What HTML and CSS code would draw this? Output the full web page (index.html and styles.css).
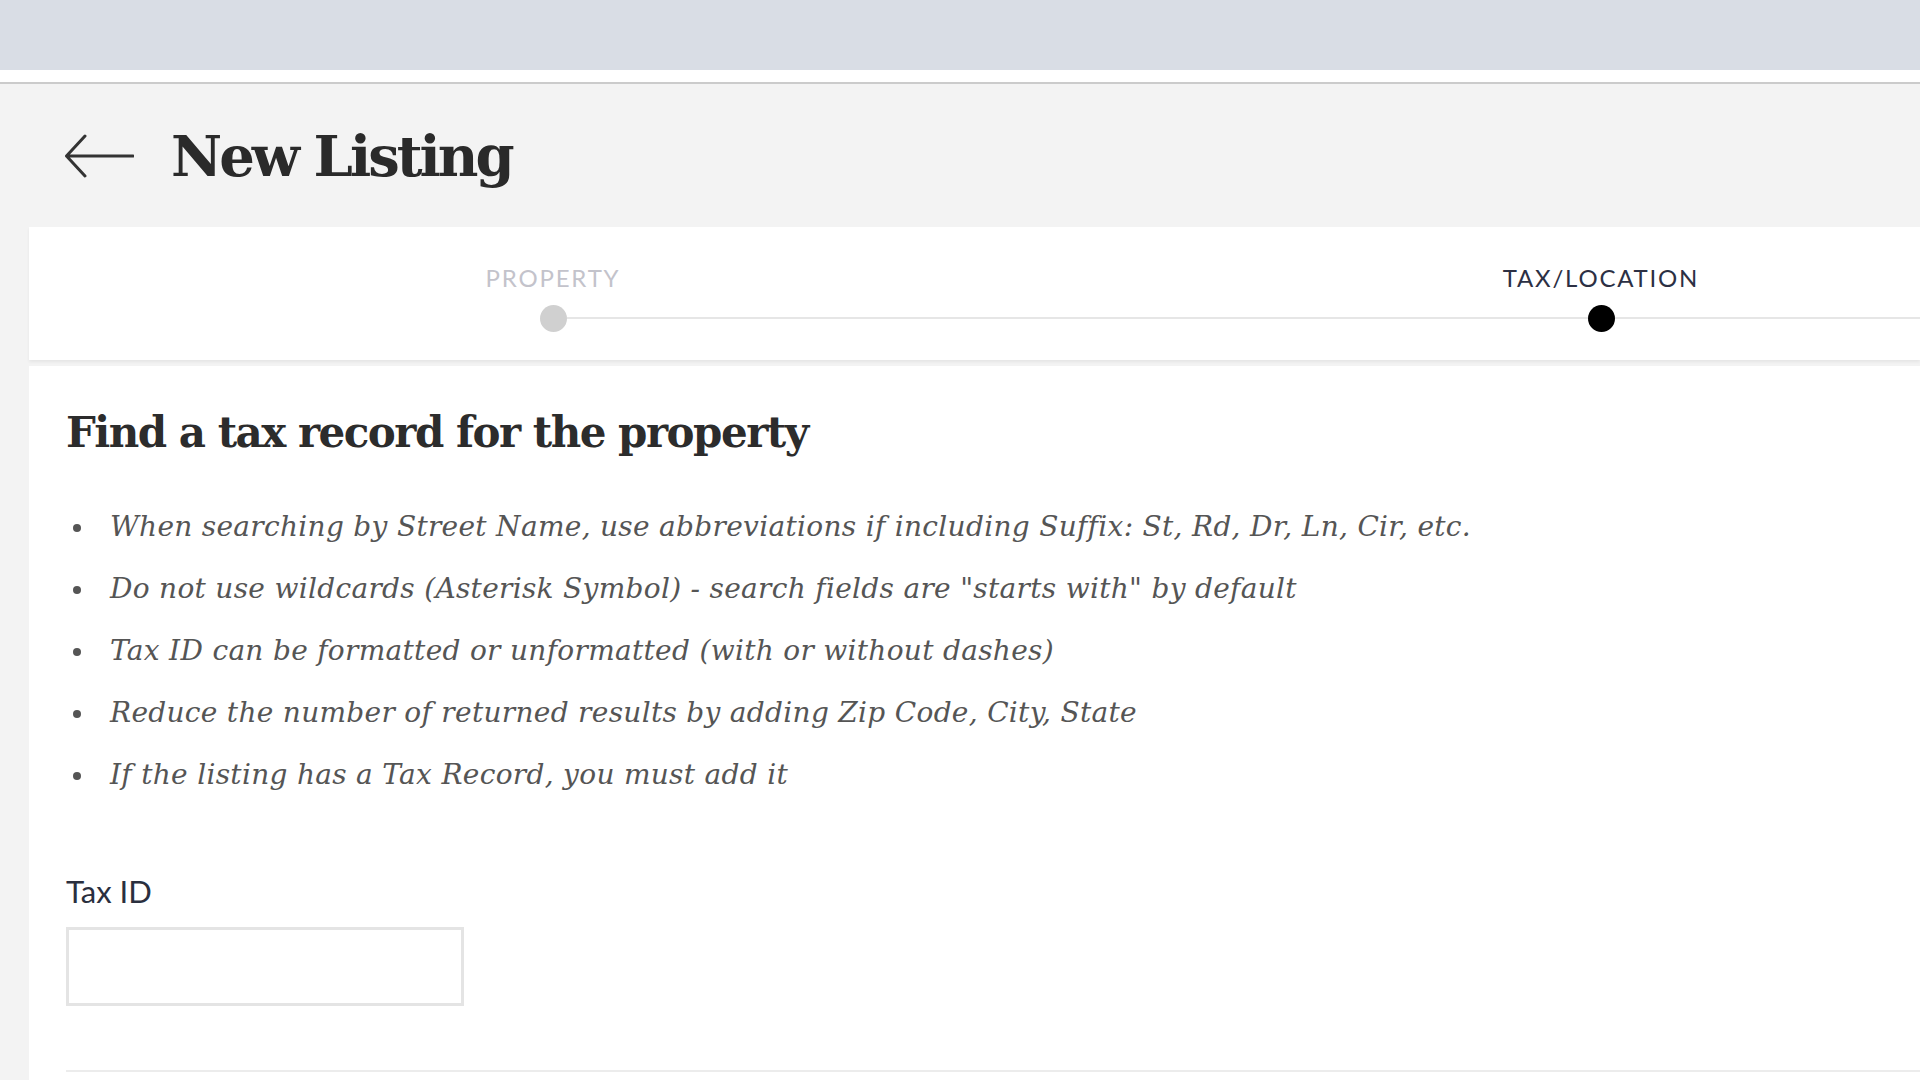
FILE: index.html
```html
<!DOCTYPE html>
<html lang="en">
<head>
<meta charset="utf-8">
<title>New Listing</title>
<link rel="stylesheet" href="styles.css">
</head>
<body>
<div class="topbar"></div>
<div class="topstrip"></div>
<header class="page-header">
  <svg class="back" width="70" height="44" viewBox="0 0 70 44" aria-hidden="true">
    <path d="M2.5 22 H69 M21 2 L2.5 22 L21 42" fill="none" stroke="#333" stroke-width="3" stroke-linecap="round" stroke-linejoin="round"/>
  </svg>
  <h1 class="page-title">New Listing</h1>
</header>
<main class="cards">
  <section class="stepper">
    <div class="step step-done">
      <div class="step-label">PROPERTY</div>
      <div class="step-track"><span class="track track-none"></span><span class="dot"></span><span class="track"></span></div>
    </div>
    <div class="step step-active">
      <div class="step-label">TAX/LOCATION</div>
      <div class="step-track"><span class="track"></span><span class="dot"></span><span class="track"></span></div>
    </div>
    <div class="step step-next">
      <div class="step-label"></div>
      <div class="step-track"><span class="track"></span><span class="dot"></span><span class="track"></span></div>
    </div>
  </section>
  <section class="content">
    <h2 class="section-title">Find a tax record for the property</h2>
    <ul class="tips">
      <li>When searching by Street Name, use abbreviations if including Suffix: St, Rd, Dr, Ln, Cir, etc.</li>
      <li>Do not use wildcards (Asterisk Symbol) - search fields are "starts with" by default</li>
      <li>Tax ID can be formatted or unformatted (with or without dashes)</li>
      <li>Reduce the number of returned results by adding Zip Code, City, State</li>
      <li>If the listing has a Tax Record, you must add it</li>
    </ul>
    <label class="field-label" for="taxid">Tax ID</label>
    <input class="field-input" id="taxid" type="text">
    <div class="divider"></div>
  </section>
</main>
</body>
</html>
```
FILE: styles.css
```css
* { box-sizing: border-box; }
html, body {
  margin: 0;
  padding: 0;
  height: 100%;
}
body {
  background: #f3f3f3;
  overflow: hidden;
  font-family: "Lato", "Liberation Sans", sans-serif;
}
.topbar {
  height: 70px;
  background: #d9dde5;
}
.topstrip {
  height: 14px;
  background: #ffffff;
  border-bottom: 2px solid #cbcbcb;
}
.page-header {
  height: 143px;
  display: flex;
  align-items: center;
  padding-left: 64px;
  gap: 37px;
}
.back { display: block; flex: none; }
.page-title {
  margin: 0;
  font-family: "DejaVu Serif", "Liberation Serif", serif;
  font-weight: bold;
  font-size: 56px;
  line-height: 64px;
  color: #2a2a2a;
  letter-spacing: -3px;
}
.cards {
  margin-left: 29px;
}
.stepper {
  height: 133px;
  background: #fff;
  display: flex;
  overflow: hidden;
  padding-top: 37px;
  box-shadow: 0 2px 3px rgba(0,0,0,0.06);
}
.step {
  flex: none;
  width: 1048px;
  display: flex;
  flex-direction: column;
  align-items: stretch;
  gap: 12px;
}
.step-label {
  min-height: 28px;
  text-align: center;
  font-family: "Lato", sans-serif;
  font-size: 24px;
  line-height: 28px;
  letter-spacing: 1.8px;
  color: #c3c3cb;
}
.step-active .step-label { color: #2c3044; }
.step-track {
  display: flex;
  align-items: center;
  height: 28px;
}
.track {
  flex: 1;
  height: 2px;
  background: #e6e6e6;
}
.track-none { background: transparent; }
.dot {
  width: 27px;
  height: 27px;
  border-radius: 50%;
  background: #d0d0d0;
  flex: none;
}
.step-active .dot { background: #000; }
.step-next .dot { visibility: hidden; }
.content {
  margin-top: 6px;
  background: #fff;
  padding: 42px 0 0 37px;
  height: 720px;
}
.section-title {
  margin: 0;
  font-family: "DejaVu Serif", "Liberation Serif", serif;
  font-weight: bold;
  font-size: 42px;
  line-height: 50px;
  color: #2c2c2c;
  letter-spacing: -1.5px;
}
.tips {
  list-style: none;
  margin: 38px 0 0 0;
  padding: 0;
}
.tips li {
  position: relative;
  padding-left: 44px;
  font-family: "DejaVu Serif", "Liberation Serif", serif;
  font-style: italic;
  font-size: 28px;
  line-height: 62px;
  color: #555;
  letter-spacing: 0.3px;
}
.tips li::before {
  content: "";
  position: absolute;
  left: 7px;
  top: 28px;
  width: 8px;
  height: 8px;
  border-radius: 50%;
  background: #555;
}
.field-label {
  display: block;
  margin-top: 67px;
  font-family: "Lato", sans-serif;
  font-size: 31px;
  line-height: 36px;
  color: #2a2f3e;
}
.field-input {
  display: block;
  margin-top: 18px;
  width: 398px;
  height: 79px;
  border: 3px solid #e4e4e4;
  background: #fff;
  outline: none;
}
.divider {
  margin-top: 64px;
  height: 2px;
  background: #ececec;
}
```
